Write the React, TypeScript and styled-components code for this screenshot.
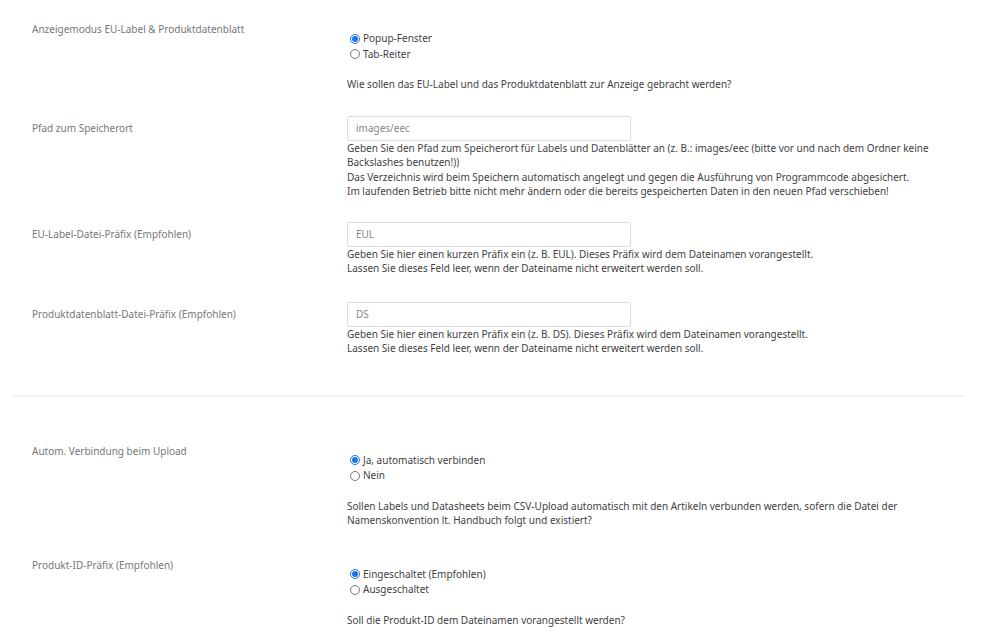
import React from "react";
import styled, { createGlobalStyle } from "styled-components";

const GlobalStyle = createGlobalStyle`
  html, body {
    margin: 0;
    padding: 0;
    background: #ffffff;
  }
  body {
    font-family: "Noto Sans", "Open Sans", "Liberation Sans", sans-serif;
    font-size: 10px;
    color: #444444;
  }
`;

const Page = styled.div`
  width: 1000px;
  padding-top: 22px;
`;

const Row = styled.div<{ $top?: number }>`
  display: grid;
  grid-template-columns: 315px 1fr;
  padding-left: 32px;
  margin-top: ${(p) => p.$top ?? 0}px;
`;

const Label = styled.div<{ $pad?: number }>`
  color: #777777;
  line-height: 14.5px;
  padding-top: ${(p) => p.$pad ?? 0}px;
`;

const Control = styled.div`
  display: flex;
  flex-direction: column;
`;

const RadioGroup = styled.div`
  display: flex;
  flex-direction: column;
  margin-top: 9px;
  margin-bottom: 15px;
`;

const RadioLabel = styled.label`
  display: flex;
  align-items: center;
  height: 15.5px;
  color: #3f3f3f;
  line-height: 15.5px;
`;

const Radio = styled.input`
  width: 10px;
  height: 10px;
  margin: 0 3px 0 3px;
  accent-color: #1a73e8;
`;

const TextInput = styled.input`
  box-sizing: border-box;
  width: 284px;
  height: 25px;
  padding: 0 8px;
  border: 1px solid #dddddd;
  border-radius: 2px;
  font-family: inherit;
  font-size: 10px;
  color: #888888;
  outline: none;
`;

const Help = styled.div`
  color: #3f3f3f;
  line-height: 14.5px;
`;

const Divider = styled.hr`
  margin: 39px 35px 47px 12px;
  border: none;
  border-top: 1px solid #f1f1f1;
  border-bottom: 1px solid #f6f6f6;
  height: 0;
`;

interface IRadioFieldProps {
  label: string;
  name: string;
  options: string[];
  help: React.ReactNode;
  top?: number;
}

function RadioField({ label, name, options, help, top }: IRadioFieldProps) {
  return (
    <Row $top={top}>
      <Label>{label}</Label>
      <Control>
        <RadioGroup>
          {options.map((o, i) => (
            <RadioLabel key={o}>
              <Radio type="radio" name={name} defaultChecked={i === 0} />
              {o}
            </RadioLabel>
          ))}
        </RadioGroup>
        <Help>{help}</Help>
      </Control>
    </Row>
  );
}

interface ITextFieldProps {
  label: string;
  value: string;
  help: React.ReactNode;
  top?: number;
}

function TextField({ label, value, help, top }: ITextFieldProps) {
  return (
    <Row $top={top}>
      <Label $pad={5}>{label}</Label>
      <Control>
        <TextInput type="text" defaultValue={value} />
        <Help>{help}</Help>
      </Control>
    </Row>
  );
}

export default function App() {
  return (
    <>
      <GlobalStyle />
      <Page>
        <RadioField
          label="Anzeigemodus EU-Label & Produktdatenblatt"
          name="mode"
          options={["Popup-Fenster", "Tab-Reiter"]}
          help="Wie sollen das EU-Label und das Produktdatenblatt zur Anzeige gebracht werden?"
        />
        <TextField
          top={24}
          label="Pfad zum Speicherort"
          value="images/eec"
          help={
            <>
              Geben Sie den Pfad zum Speicherort für Labels und Datenblätter an
              (z. B.: images/eec (bitte vor und nach dem Ordner keine
              <br />
              Backslashes benutzen!))
              <br />
              Das Verzeichnis wird beim Speichern automatisch angelegt und gegen
              die Ausführung von Programmcode abgesichert.
              <br />
              Im laufenden Betrieb bitte nicht mehr ändern oder die bereits
              gespeicherten Daten in den neuen Pfad verschieben!
            </>
          }
        />
        <TextField
          top={23}
          label="EU-Label-Datei-Präfix (Empfohlen)"
          value="EUL"
          help={
            <>
              Geben Sie hier einen kurzen Präfix ein (z. B. EUL). Dieses Präfix
              wird dem Dateinamen vorangestellt.
              <br />
              Lassen Sie dieses Feld leer, wenn der Dateiname nicht erweitert
              werden soll.
            </>
          }
        />
        <TextField
          top={26}
          label="Produktdatenblatt-Datei-Präfix (Empfohlen)"
          value="DS"
          help={
            <>
              Geben Sie hier einen kurzen Präfix ein (z. B. DS). Dieses Präfix
              wird dem Dateinamen vorangestellt.
              <br />
              Lassen Sie dieses Feld leer, wenn der Dateiname nicht erweitert
              werden soll.
            </>
          }
        />
        <Divider />
        <RadioField
          label="Autom. Verbindung beim Upload"
          name="auto"
          options={["Ja, automatisch verbinden", "Nein"]}
          help={
            <>
              Sollen Labels und Datasheets beim CSV-Upload automatisch mit den
              Artikeln verbunden werden, sofern die Datei der
              <br />
              Namenskonvention lt. Handbuch folgt und existiert?
            </>
          }
        />
        <RadioField
          top={30}
          label="Produkt-ID-Präfix (Empfohlen)"
          name="pid"
          options={["Eingeschaltet (Empfohlen)", "Ausgeschaltet"]}
          help="Soll die Produkt-ID dem Dateinamen vorangestellt werden?"
        />
      </Page>
    </>
  );
}
